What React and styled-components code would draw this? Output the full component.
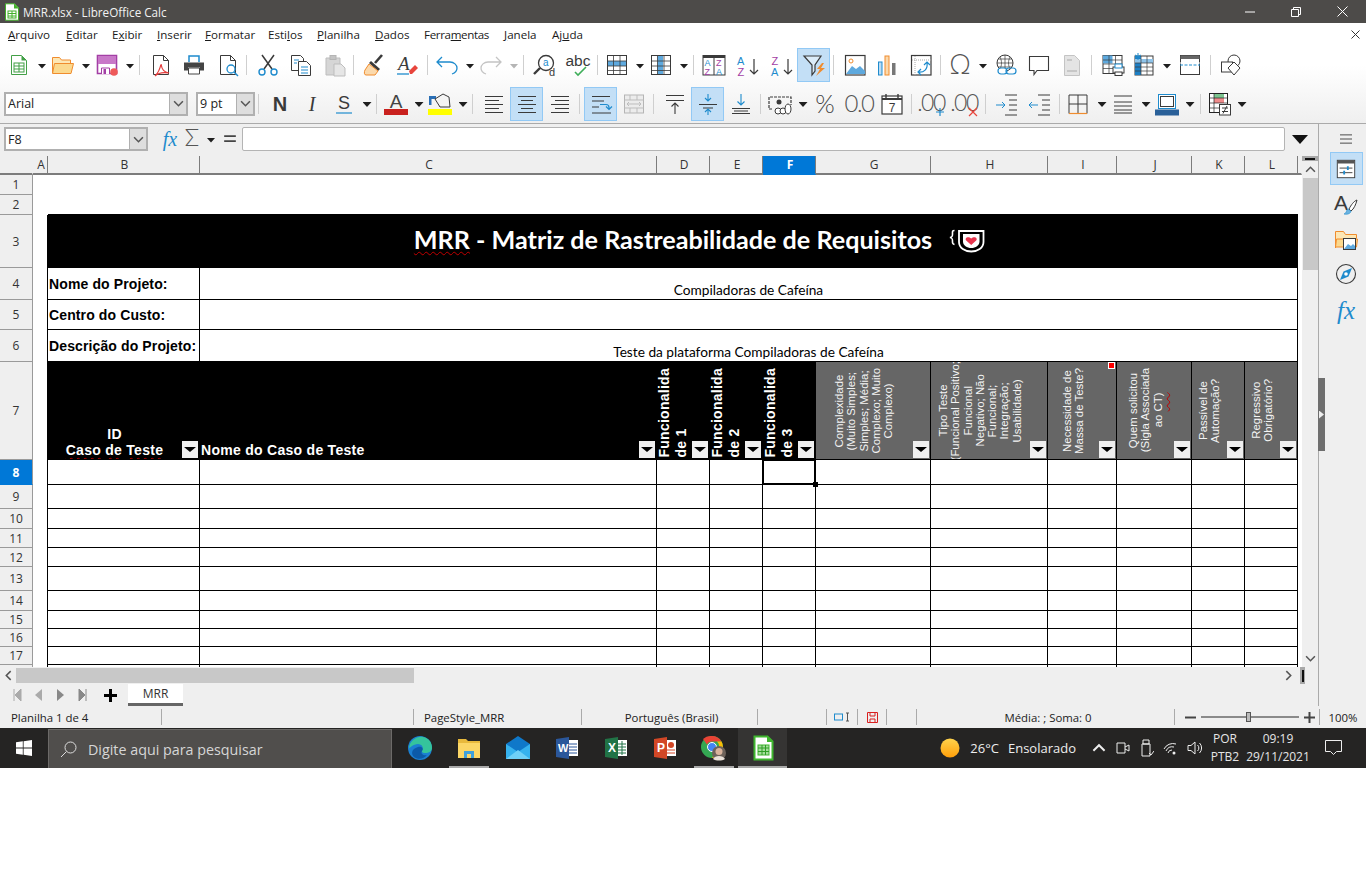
import React from 'react';
import styled, { createGlobalStyle } from 'styled-components';

const UI = '"Open Sans", "Noto Sans", sans-serif';
const ARIAL = '"Liberation Sans", Arial, sans-serif';
const CALIBRI = 'Lato, "Open Sans", sans-serif';
const SERIF = '"Liberation Serif", serif';

const Global = createGlobalStyle`
    html, body { margin: 0; padding: 0; background: #fff; }
    * { box-sizing: border-box; }
`;

const Page = styled.div`
    width: 1366px;
    height: 768px;
    display: flex;
    flex-direction: column;
    font-family: ${UI};
    overflow: hidden;
`;

const TitleBar = styled.div`
    height: 23px;
    flex: none;
    background: #4d4b49;
    color: #f2f2f2;
    display: flex;
    align-items: center;
    padding-left: 4px;
    padding-right: 1px;
    font-size: 11.7px;
`;

const TitleText = styled.span`
    margin-left: 3px;
    flex: 1;
`;

const WinButton = styled.div`
    width: 46px;
    height: 23px;
    display: flex;
    align-items: center;
    justify-content: center;
`;

const MenuBar = styled.div`
    height: 23px;
    flex: none;
    background: #fff;
    display: flex;
    align-items: center;
    padding-left: 8px;
    font-size: 11.6px;
    color: #1a1a1a;
`;

const MenuItem = styled.div`
    width: ${p => p.$w}px;
    flex: none;
    letter-spacing: ${p => (p.$tight ? '-0.35px' : '0')};
`;

const MenuClose = styled.div`
    margin-left: auto;
    width: 22px;
    display: flex;
    justify-content: center;
`;

const ToolStack = styled.div`
    height: 78px;
    flex: none;
    background: linear-gradient(#ffffff 0%, #ffffff 25%, #efefef 100%);
    border-bottom: 1px solid #aaa;
`;

const ToolRowBox = styled.div`
    height: ${p => p.$h}px;
    display: flex;
    align-items: center;
`;

const Slot = styled.div`
    flex: none;
    width: ${p => p.$w}px;
    height: 34px;
    display: flex;
    align-items: center;
    justify-content: center;
    background: ${p => (p.$active ? '#c3dff6' : 'transparent')};
    border: ${p => (p.$active ? '1px solid #92c9f5' : 'none')};
`;

const Sep = styled.div`
    flex: none;
    width: 1px;
    height: 20px;
    background: #cfcfcf;
`;

const Caret = styled.div`
    flex: none;
    width: 9px;
    height: 5px;
    margin-top: 2px;
    background: ${p => (p.$off ? '#b5b5b5' : '#1f1f1f')};
    clip-path: polygon(0 0, 100% 0, 50% 100%);
`;

const SelectBox = styled.div`
    flex: none;
    width: ${p => p.$w}px;
    height: 24px;
    background: #fff;
    border: 2px solid #b0b0b0;
    display: flex;
    align-items: center;
    font-size: 12.5px;
    color: #222;
`;

const SelectText = styled.span`
    flex: 1;
    padding-left: 2px;
`;

const SelectArrow = styled.span`
    width: 17px;
    height: 100%;
    background: #dedede;
    border-left: 1px solid #b0b0b0;
    display: flex;
    align-items: center;
    justify-content: center;
`;

const Workspace = styled.div`
    flex: 1;
    min-height: 0;
    display: flex;
`;

const MainColumn = styled.div`
    flex: 1;
    min-width: 0;
    display: flex;
    flex-direction: column;
    background: #efefef;
`;

const FormulaBar = styled.div`
    height: 32px;
    flex: none;
    display: flex;
    align-items: flex-start;
    padding: 3px 0 0 4px;
    background: #efefef;
`;

const FormulaIcon = styled.div`
    flex: none;
    width: ${p => p.$w}px;
    margin-left: ${p => p.$ml || 0}px;
    height: 24px;
    display: flex;
    align-items: center;
    justify-content: center;
`;

const FormulaInput = styled.div`
    flex: none;
    width: 1043px;
    height: 24px;
    margin-left: 3px;
    background: #fff;
    border: 1px solid #b4b4b4;
    border-radius: 2px;
`;

const SheetRow = styled.div`
    flex: none;
    height: 511px;
    display: flex;
`;

const SheetGrid = styled.div`
    flex: none;
    width: 1302px;
    height: 511px;
    overflow: hidden;
    background: #fff;
    display: grid;
    grid-template-columns: 33px 15px 152px 457px 53px 53px 53px 115px 117px 69px 75px 53px 53px 4px;
    grid-template-rows: 19px 20px 20px 53px 32px 30px 32px 98px 25px 24px 20px 19px 19px 24px 20px 18px 18px 18px 30px;
`;

const ColHead = styled.div`
    background: ${p => (p.$sel ? '#0078d7' : '#efefef')};
    color: ${p => (p.$sel ? '#fff' : '#333')};
    font-weight: ${p => (p.$sel ? 700 : 400)};
    font-size: 12px;
    border-bottom: 2px solid ${p => (p.$sel ? '#0078d7' : '#7c7c7c')};
    border-right: 1px solid ${p => (p.$bare ? 'transparent' : '#7c7c7c')};
    padding-left: 2px;
    display: flex;
    align-items: center;
    justify-content: center;
`;

const RowHead = styled.div`
    background: ${p => (p.$sel ? '#0078d7' : '#efefef')};
    color: ${p => (p.$sel ? '#fff' : '#333')};
    font-weight: ${p => (p.$sel ? 700 : 400)};
    font-size: 12px;
    border-bottom: 1px solid ${p => (p.$sel ? '#0078d7' : '#9a9a9a')};
    border-right: 1px solid #9a9a9a;
    display: flex;
    align-items: center;
    justify-content: center;
`;

const BlankHead = styled.div`
    background: #efefef;
    border-right: 1px solid #9a9a9a;
`;

const Blank = styled.div`
    grid-column: span ${p => p.$span || 1};
    border-bottom: ${p => (p.$line ? '1px solid #000' : 'none')};
`;

const Gutter = styled.div`
    border-right: 1px solid #000;
`;

const TitleCell = styled.div`
    grid-column: span 11;
    position: relative;
    background: #000;
    color: #fff;
    font-family: ${CALIBRI};
    font-weight: 700;
    font-size: 25.15px;
    display: flex;
    align-items: center;
    justify-content: center;
    padding-bottom: 5px;
`;

const Squiggle = styled.span`
    text-decoration: underline wavy #c00000 1px;
    text-underline-offset: 2px;
    text-decoration-skip-ink: none;
`;

const LogoMark = styled.svg`
    position: absolute;
    left: 901px;
    top: 14px;
`;

const LabelCell = styled.div`
    border-right: 1px solid #000;
    border-bottom: 1px solid #000;
    font-family: ${ARIAL};
    font-weight: 700;
    font-size: 14px;
    letter-spacing: 0.12px;
    color: #000;
    padding-left: 1px;
    display: flex;
    align-items: center;
    white-space: nowrap;
`;

const ValueCell = styled.div`
    grid-column: span 10;
    border-right: 1px solid #000;
    border-bottom: 1px solid #000;
    font-family: ${CALIBRI};
    font-size: 13.7px;
    color: #000;
    display: flex;
    align-items: flex-end;
    justify-content: center;
    line-height: 16px;
    padding-bottom: 1px;
`;

const HeadCell = styled.div`
    position: relative;
    background: ${p => (p.$gray ? '#666' : '#000')};
    border-right: 1px solid #000;
    border-bottom: 1px solid #000;
    color: #fff;
    font-family: ${ARIAL};
    overflow: hidden;
    display: flex;
    align-items: ${p => (p.$gray ? 'center' : 'flex-end')};
    justify-content: ${p => (p.$gray ? 'center' : 'flex-start')};
    padding-right: ${p => (p.$gray ? '18px' : '0')};
`;

const WideHead = styled.div`
    width: ${p => p.$w}px;
    flex: none;
    text-align: ${p => (p.$center ? 'center' : 'left')};
    font-weight: 700;
    font-size: 14px;
    letter-spacing: 0.28px;
    line-height: 16.6px;
    padding-left: ${p => (p.$center ? '0' : '1px')};
    padding-right: ${p => (p.$center ? '19px' : '0')};
`;

const TurnedBold = styled.div`
    writing-mode: vertical-rl;
    transform: rotate(180deg);
    white-space: pre;
    font-weight: 700;
    font-size: 14px;
    letter-spacing: 0.27px;
    line-height: 16.7px;
    text-align: left;
    padding: 1px 0 0 0;
    margin-left: -1px;
`;

const TurnedThin = styled.div`
    writing-mode: vertical-rl;
    transform: rotate(180deg);
    white-space: pre;
    font-size: 11.4px;
    line-height: 12.3px;
    text-align: center;
    color: #f4f4f4;
`;

const FilterButton = styled.div`
    position: absolute;
    right: 1px;
    bottom: 1px;
    width: 16px;
    height: 17px;
    background: #efefef;
    display: flex;
    align-items: center;
    justify-content: center;
`;

const CommentMark = styled.div`
    position: absolute;
    top: 0;
    right: 1px;
    width: 7px;
    height: 7px;
    background: #f00;
    border: 1px solid #fff;
`;

const DataCell = styled.div`
    position: relative;
    border-right: 1px solid #000;
    border-bottom: 1px solid #000;
`;

const Cursor = styled.div`
    position: absolute;
    left: -1px;
    top: -1px;
    right: -1px;
    bottom: -1px;
    border: 2px solid #000;
`;

const CursorHandle = styled.div`
    position: absolute;
    right: -4px;
    bottom: -4px;
    width: 5px;
    height: 5px;
    background: #000;
`;

const VScroll = styled.div`
    flex: none;
    width: 16px;
    height: 511px;
    position: relative;
    background: #efefef;
    display: flex;
    flex-direction: column;
    align-items: center;
`;

const SplitHandle = styled.div`
    width: 16px;
    height: 5px;
    background: #a8a8a8;
    display: flex;
    align-items: center;
    justify-content: center;
`;

const ScrollArrow = styled.div`
    height: ${p => p.$h}px;
    width: ${p => (p.$w ? `${p.$w}px` : 'auto')};
    margin-left: ${p => p.$ml || 0}px;
    display: flex;
    align-items: center;
    justify-content: center;
    flex: none;
`;

const VThumb = styled.div`
    width: 15px;
    height: 92px;
    background: #c8c8c8;
    flex: none;
`;

const HScroll = styled.div`
    height: 17px;
    flex: none;
    display: flex;
    align-items: center;
    background: #efefef;
`;

const HThumb = styled.div`
    width: 398px;
    height: 15px;
    background: #c8c8c8;
`;

const HSplit = styled.div`
    width: 5px;
    height: 17px;
    background: #a8a8a8;
    margin-left: 4px;
    display: flex;
    align-items: center;
    justify-content: center;
`;

const TabBar = styled.div`
    height: 23px;
    flex: none;
    display: flex;
    padding-left: 6px;
    background: #efefef;
    border-bottom: 1px solid #aaa;
`;

const TabNav = styled.div`
    flex: none;
    width: ${p => p.$w}px;
    display: flex;
    align-items: center;
    justify-content: center;
`;

const PlusTab = styled.div`
    flex: none;
    width: 37px;
    display: flex;
    align-items: center;
    justify-content: center;
`;

const SheetTab = styled.div`
    flex: none;
    width: 55px;
    background: #fff;
    border-bottom: 3px solid #666;
    margin-left: -1px;
    font-size: 12px;
    color: #333;
    display: flex;
    align-items: center;
    justify-content: center;
`;

const Sidebar = styled.div`
    flex: none;
    width: 48px;
    position: relative;
    background: #efefef;
    border-left: 1px solid #aaa;
    display: flex;
    flex-direction: column;
    align-items: center;
    padding: 2px 0 0 7px;
`;

const SideSlot = styled.div`
    flex: none;
    width: 33px;
    height: ${p => p.$h}px;
    display: flex;
    align-items: center;
    justify-content: center;
    background: ${p => (p.$active ? '#c3dff6' : 'transparent')};
    border: ${p => (p.$active ? '1px solid #92c9f5' : 'none')};
`;

const SideHandle = styled.div`
    position: absolute;
    left: -1px;
    top: 254px;
    width: 7px;
    height: 73px;
    background: #6e6e6e;
    display: flex;
    align-items: center;
    justify-content: center;
`;

const SideHandleArrow = styled.div`
    width: 5px;
    height: 8px;
    background: #eee;
    clip-path: polygon(0 0, 100% 50%, 0 100%);
`;

const StatusBar = styled.div`
    height: 22px;
    flex: none;
    background: #efefef;
    display: flex;
    align-items: center;
    font-size: 11.4px;
    color: #222;
`;

const StatusCell = styled.div`
    flex: none;
    width: ${p => p.$w}px;
    height: 16px;
    border-right: ${p => (p.$open ? 'none' : '1px solid #aaa')};
    display: flex;
    align-items: center;
    justify-content: ${p => (p.$left ? 'flex-start' : 'center')};
    padding-left: ${p => p.$left || p.$nudge || 0}px;
`;

const ZoomTrack = styled.div`
    position: relative;
    width: 98px;
    height: 2px;
    background: #8a8a8a;
    margin: 0 5px;
`;

const ZoomThumb = styled.div`
    position: absolute;
    left: 45px;
    top: -4px;
    width: 5px;
    height: 10px;
    background: #bbb;
    border: 1px solid #555;
`;

const TaskBar = styled.div`
    height: 40px;
    flex: none;
    background: #252423;
    display: flex;
    color: #eee;
`;

const StartButton = styled.div`
    flex: none;
    width: 48px;
    display: flex;
    align-items: center;
    justify-content: center;
`;

const SearchBox = styled.div`
    flex: none;
    width: 344px;
    background: #504e4c;
    border: 1px solid #6c6a68;
    border-bottom: none;
    margin-top: 1px;
    display: flex;
    align-items: center;
    padding-left: 11px;
    font-size: 14.3px;
    color: #d6d6d6;
    gap: 11px;
`;

const TaskGap = styled.div`
    flex: none;
    width: 3px;
`;

const AppSlot = styled.div`
    flex: none;
    position: relative;
    width: 49px;
    display: flex;
    align-items: center;
    justify-content: center;
    background: ${p => (p.$current ? '#353433' : 'transparent')};
    &::after {
        content: '';
        display: ${p => (p.$running || p.$current ? 'block' : 'none')};
        position: absolute;
        bottom: 0;
        left: ${p => (p.$current ? 0 : 5)}px;
        right: ${p => (p.$current ? 0 : 4)}px;
        height: 2px;
        background: #a9a9a9;
    }
`;

const Tray = styled.div`
    margin-left: auto;
    display: flex;
    align-items: center;
    font-size: 13px;
    color: #eee;
`;

const TrayIcon = styled.div`
    flex: none;
    width: ${p => p.$w || 24}px;
    margin-left: ${p => p.$ml || 0}px;
    display: flex;
    align-items: center;
    justify-content: center;
`;

const TrayLabel = styled.span`
    margin-left: ${p => p.$ml}px;
    flex: none;
`;

const TrayStack = styled.div`
    flex: none;
    width: ${p => p.$w}px;
    font-size: 12px;
    line-height: 18px;
    text-align: center;
    color: #e6e6e6;
`;

const D = '#3a3a3a';
const B = '#1e8bcd';
const O = '#f08c2e';
const P = '#a33fa5';

const tx = { fontFamily: ARIAL };
const thin = { fontFamily: CALIBRI, fontWeight: 300 };

const ICONS = {
    newCalc: <>
        <path d="M4.5 2.5h10l5 5v14h-15z" fill="#fff" stroke="#43a047" />
        <path d="M14.5 2.5l5 5h-5z" fill="#43a047" />
        <rect x="7" y="10" width="10" height="9" fill="#fff" stroke="#43a047" />
        <path d="M7 13h10M7 16h10M12 10v9" stroke="#43a047" />
    </>,
    open: <>
        <path d="M1.5 20V4.500h7l2 2.500h9v3" fill="#fde7b5" stroke={O} />
        <path d="M1.500 20.500l2-10h19l-2.500 10z" fill="#fbd98e" stroke={O} />
    </>,
    save: <>
        <path d="M2.500 2.500h19v18h-19z" fill="#fff" stroke={P} strokeWidth="1.600" />
        <path d="M3 3h18v8H3z" fill="#c878c8" />
        <path d="M6.500 21v-6h8v6" fill="#fff" stroke={P} />
        <rect x="8.500" y="16" width="2.500" height="5" fill={P} />
        <circle cx="19" cy="19" r="3.800" fill="#ee5a5a" />
    </>,
    pdf: <>
        <path d="M4.500 2.500h10l5 5v14h-15z" fill="#fff" stroke={D} />
        <path d="M14.500 2.500v5h5" fill="none" stroke={D} />
        <path d="M12 11c1 6 3 8 8 9-6-1-11 0-14 3 3-3 5-7 6-12z" fill="none" stroke="#e33b3b" strokeWidth="1.200" />
    </>,
    print: <>
        <path d="M7 9V3h10v6" fill="#fff" stroke={B} strokeWidth="1.500" />
        <path d="M2 9.500h20v8h-4v-3H6v3H2z" fill="#444" />
        <path d="M6.500 15h11v6h-11z" fill="#fff" stroke="#444" />
    </>,
    preview: <>
        <path d="M4.500 2.500h10l5 5v14h-15z" fill="#fff" stroke={D} />
        <path d="M14.500 2.500v5h5" fill="none" stroke={D} />
        <circle cx="15" cy="16" r="4" fill="#fff" stroke={B} strokeWidth="1.300" />
        <path d="M18 19l4 4" stroke={B} strokeWidth="1.500" />
    </>,
    cut: <>
        <path d="M6 2l10 14M18 2L8 16" stroke={D} strokeWidth="1.500" fill="none" />
        <circle cx="6" cy="19" r="3" fill="none" stroke={B} strokeWidth="1.400" />
        <circle cx="18" cy="19" r="3" fill="none" stroke={B} strokeWidth="1.400" />
    </>,
    copy: <>
        <path d="M2.500 2.500h9l3 3v12h-12z" fill="#fff" stroke={D} />
        <path d="M9.500 8.500h8l4 4v10h-12z" fill="#fff" stroke={D} />
        <path d="M5 7h5M5 10h3M12 14h7M12 17h7M12 20h7" stroke={B} />
    </>,
    paste: <>
        <path d="M3 5h14v17H3z" fill="#d6d6d6" stroke="#bdbdbd" />
        <rect x="7" y="2.500" width="6" height="4" fill="#c4c4c4" stroke="#b5b5b5" />
        <path d="M11 11h7l4 4v8H11z" fill="#e6e6e6" stroke="#bdbdbd" />
    </>,
    clone: <>
        <path d="M13 10l7-8" stroke={D} strokeWidth="2.600" />
        <path d="M9 8l9 8-2 2-9-8z" fill={D} />
        <path d="M7 11l9 7-3 4H4c-2 0-2-3-1-5z" fill="#fbd9ac" stroke={O} />
    </>,
    clear: <>
        <text x="3" y="17" fontSize="19" fontStyle="italic" fill={D} style={{ fontFamily: SERIF }}>A</text>
        <path d="M2 21h12" stroke={B} strokeWidth="1.300" />
        <path d="M14 18l6-6 3 3-6 6h-2z" fill="#e8453c" />
    </>,
    undo: <path d="M7 4L2 9l5 5M2 9h13c4 0 7 3 7 6s-2 5-5 6" fill="none" stroke={B} strokeWidth="1.300" />,
    redo: <path d="M17 4l5 5-5 5M22 9H9c-4 0-7 3-7 6s2 5 5 6" fill="none" stroke="#c4c4c4" strokeWidth="1.300" />,
    find: <>
        <circle cx="13" cy="10" r="7.500" fill="#fff" stroke={D} strokeWidth="1.300" />
        <path d="M7 15l-6 6" stroke={D} strokeWidth="2.400" />
        <text x="10" y="13" fontSize="10" fill={B} style={tx}>a</text>
        <text x="16" y="23" fontSize="11" fill={D} style={tx}>d</text>
    </>,
    spell: <>
        <text x="12" y="13" textAnchor="middle" fontSize="15.500" fill={D} style={tx}>abc</text>
        <path d="M9 19l3 3 8-8" fill="none" stroke="#3fae5a" strokeWidth="1.600" />
    </>,
    rows: <>
        <rect x="2.500" y="2.500" width="19" height="19" fill="#fff" stroke={D} />
        <rect x="3" y="8" width="18" height="5" fill="#5ea9de" />
        <path d="M2.500 8h19M2.500 13h19M2.500 17.500h19M8.500 2.500v19M15 2.500v19" stroke={D} strokeWidth=".8" />
    </>,
    cols: <>
        <rect x="2.500" y="2.500" width="19" height="19" fill="#fff" stroke={D} />
        <rect x="8.500" y="3" width="5.500" height="18" fill="#5ea9de" />
        <path d="M2.500 8h19M2.500 13h19M2.500 17.500h19M8.500 2.500v19M15 2.500v19" stroke={D} strokeWidth=".8" />
    </>,
    azBox: <>
        <rect x="1" y="2.500" width="22" height="19.500" fill="#fff" stroke={D} />
        <rect x="1" y="2" width="22" height="3" fill={D} />
        <path d="M12 5v17" stroke={D} />
        <text x="2.500" y="13" fontSize="9" fill={B} style={tx}>A</text>
        <text x="2.500" y="21.500" fontSize="9" fill={P} style={tx}>Z</text>
        <text x="14" y="13" fontSize="9" fill={P} style={tx}>Z</text>
        <text x="14" y="21.500" fontSize="9" fill={B} style={tx}>A</text>
    </>,
    sortAsc: <>
        <text x="1" y="11.500" fontSize="11" fill={B} style={tx}>A</text>
        <text x="1.500" y="22.500" fontSize="11" fill={P} style={tx}>Z</text>
        <path d="M18 6v15M14 17l4 4 4-4" fill="none" stroke={D} strokeWidth="1.200" />
    </>,
    sortDesc: <>
        <text x="1.500" y="11.500" fontSize="11" fill={P} style={tx}>Z</text>
        <text x="1" y="22.500" fontSize="11" fill={B} style={tx}>A</text>
        <path d="M18 6v15M14 17l4 4 4-4" fill="none" stroke={D} strokeWidth="1.200" />
    </>,
    filter: <>
        <path d="M2 3h17l-6 9v6l-3 4v-10z" fill="#fff" fillOpacity=".4" stroke={D} strokeWidth="1.200" />
        <path d="M20 10l-5 6h3l-4 7 9-8h-4l3-5z" fill={O} />
    </>,
    image: <>
        <rect x="2.500" y="2.500" width="19.500" height="19.500" fill="#fff" stroke={D} strokeWidth="1.200" />
        <circle cx="8" cy="8" r="2" fill="none" stroke={O} />
        <path d="M3 21l6-8 4 3 4-3 5 5v3z" fill="#5ea9de" />
    </>,
    chart: <>
        <rect x="3.500" y="9" width="3.500" height="13" fill="#bcdcf3" stroke={B} />
        <rect x="10" y="3" width="4" height="19" fill="#fbd9ac" stroke={O} />
        <rect x="17" y="10" width="3.500" height="12" fill="#777" />
    </>,
    pivot: <>
        <rect x="2.500" y="2.500" width="19.500" height="19.500" fill="#fff" stroke={D} strokeWidth="1.200" />
        <path d="M6 3v19M3 7h19" stroke="#aaa" strokeDasharray="1 1" />
        <path d="M9 19c6 1 10-3 9-9M15 12l3-3 3 3M12 16l-3 3 3 3" fill="none" stroke={B} strokeWidth="1.200" />
    </>,
    omega: <text x="12" y="21" textAnchor="middle" fontSize="27" fill="#555" style={thin}>Ω</text>,
    link: <>
        <circle cx="11" cy="10" r="8" fill="#fff" stroke={D} />
        <path d="M3 10h16M11 2v16M6 4c2 4 2 8 0 12M16 4c-2 4-2 8 0 12M4 6h14M4 14h14" stroke={D} strokeWidth=".7" fill="none" />
        <rect x="4" y="15" width="9" height="6" rx="3" fill="#fff" stroke={B} strokeWidth="1.200" />
        <rect x="12" y="15" width="10" height="6" rx="3" fill="none" stroke={B} strokeWidth="1.200" />
    </>,
    comment: <path d="M2.500 3.500h19v14H10l-3 4v-4H2.500z" fill="#fff" stroke={D} strokeWidth="1.100" />,
    pageOff: <>
        <path d="M4.500 2.500h10l5 5v15h-15z" fill="#e4e4e4" stroke="#c4c4c4" />
        <path d="M7 7h5M7 18h10" stroke="#bdbdbd" strokeWidth="1.400" />
    </>,
    printArea: <>
        <rect x="2" y="2.500" width="19" height="18" fill="#fff" stroke={D} />
        <rect x="2" y="2.500" width="9.500" height="8" fill="#5ea9de" />
        <path d="M2 7h19M2 11h19M2 15.500h19M8 2.500v18M14.500 2.500v18" stroke={D} strokeWidth=".7" />
        <rect x="12" y="14" width="11" height="6" fill="#fff" stroke={D} />
        <rect x="14" y="11" width="7" height="4" fill="#fff" stroke={B} />
        <rect x="14" y="19" width="7" height="3.500" fill="#fff" stroke={D} />
    </>,
    freeze: <>
        <rect x="3" y="3" width="18" height="19" fill="#fff" stroke={D} />
        <rect x="3" y="3" width="6" height="19" fill="#1e7fc4" />
        <rect x="3" y="6" width="18" height="4" fill="#8fc4ea" />
        <path d="M3 10h18M3 14h18M3 18h18M9 3v19M15 3v19" stroke={D} strokeWidth=".7" />
        <path d="M6 0v7M3 2l6 3M9 2L3 5" stroke="#1e8bcd" strokeWidth="1" />
    </>,
    header: <>
        <rect x="2.500" y="2.500" width="19" height="19" fill="#fff" stroke={D} />
        <rect x="2.500" y="2.500" width="19" height="3.500" fill="#666" />
        <path d="M2 12h20" stroke={B} strokeDasharray="3 1.500" />
        <path d="M1.500 10h2M20.500 10h2" stroke="#fff" />
    </>,
    shapes: <>
        <circle cx="15" cy="8" r="6" fill="#fff" stroke={D} />
        <rect x="2.500" y="9" width="11" height="10" fill="#fff" stroke={D} />
        <path d="M15 9l6 6-6 7-6-7z" fill="#fff" stroke={D} />
    </>,
    bold: <text x="12" y="19" textAnchor="middle" fontSize="20" fontWeight="700" fill={D} style={tx}>N</text>,
    italic: <text x="12" y="19" textAnchor="middle" fontSize="20" fontStyle="italic" fill={D} style={{ fontFamily: SERIF }}>I</text>,
    under: <>
        <text x="12" y="17" textAnchor="middle" fontSize="18" fill={D} style={tx}>S</text>
        <path d="M4 21h16" stroke={B} strokeWidth="1.200" />
    </>,
    fontColor: <>
        <text x="12" y="16" textAnchor="middle" fontSize="19" fill="#444" style={tx}>A</text>
        <rect x="0" y="17" width="24" height="6" fill="#c9211e" />
    </>,
    bgColor: <>
        <path d="M1 4h7v3H3.500v6H1z" fill="#2a6fb5" />
        <path d="M7 7l8-5 6 3 1 10H12z" fill="#f4f4f4" stroke={D} />
        <rect x="0" y="17" width="24" height="6" fill="#ffff00" />
    </>,
    alignLeft: <path d="M3 4.500h18M3 8.500h14M3 12.500h18M3 16.500h14M3 20.500h18" stroke={D} strokeWidth="1.100" />,
    alignCenter: <path d="M3 4.500h18M6 8.500h12M3 12.500h18M6 16.500h12M3 20.500h18" stroke={D} strokeWidth="1.100" />,
    alignRight: <path d="M3 4.500h18M7 8.500h14M3 12.500h18M7 16.500h14M3 20.500h18" stroke={D} strokeWidth="1.100" />,
    wrap: <>
        <path d="M3 4.500h18M3 9h12M3 21h19M3 15h7" stroke={D} strokeWidth="1.100" />
        <path d="M13 12.500h6c2 0 3 1 3 3v1M19 14.500l3 3 3-3" transform="translate(-2 0)" fill="none" stroke={B} strokeWidth="1.200" />
    </>,
    merge: <>
        <rect x="2.500" y="3" width="19" height="18" fill="#ececec" stroke="#b5b5b5" />
        <path d="M2.500 8h19M2.500 16h19M8 3v5M15 3v5M8 16v5M15 16v5M5 12h14M7 10l-2 2 2 2M17 10l2 2-2 2" fill="none" stroke="#bdbdbd" />
    </>,
    vTop: <path d="M3 3.500h18M3 8.500h18M12 22V11M8.500 14.500L12 11l3.500 3.500" fill="none" stroke={D} strokeWidth="1.100" />,
    vMid: <>
        <path d="M3 12.500h18M7 16h10" fill="none" stroke={D} strokeWidth="1.100" />
        <path d="M12 2v7M9 6l3 3 3-3M12 23v-6M9 20l3-3 3 3" fill="none" stroke={B} strokeWidth="1.100" />
    </>,
    vBot: <>
        <path d="M3 16.500h18M3 21.500h18M5 19h14" fill="none" stroke={D} strokeWidth="1.100" />
        <path d="M12 2v11M8.500 9.500L12 13l3.500-3.500" fill="none" stroke={B} strokeWidth="1.100" />
    </>,
    currency: <>
        <path d="M4 17H1V5h22v8" fill="none" stroke={D} strokeDasharray="3 1" strokeWidth="1.200" />
        <circle cx="11" cy="10" r="2.500" fill={D} />
        <ellipse cx="10" cy="19" rx="3" ry="3" fill="#fff" stroke={D} />
        <ellipse cx="15" cy="19" rx="3" ry="3" fill="#fff" stroke={D} />
        <ellipse cx="20" cy="17" rx="3" ry="5" fill="#fff" stroke={D} />
    </>,
    percent: <text x="12" y="21" textAnchor="middle" fontSize="25" fill="#444" style={thin}>%</text>,
    number: <text x="12" y="20" textAnchor="middle" fontSize="24" letterSpacing="-1.500" fill="#555" style={thin}>0.0</text>,
    date: <>
        <rect x="2" y="4" width="20" height="18" fill="#fff" stroke={D} strokeWidth="1.200" />
        <path d="M2 7h20" stroke={D} strokeWidth="2" />
        <path d="M6 2v4M18 2v4" stroke={D} strokeWidth="1.400" />
        <text x="12" y="20" textAnchor="middle" fontSize="12" fill={D} style={tx}>7</text>
    </>,
    addDec: <>
        <text x="10" y="19" textAnchor="middle" fontSize="23" letterSpacing="-1.500" fill="#555" style={thin}>.00</text>
        <path d="M19 16v8M15 20h8" stroke={B} strokeWidth="1.200" />
    </>,
    delDec: <>
        <text x="10" y="19" textAnchor="middle" fontSize="23" letterSpacing="-1.500" fill="#555" style={thin}>.00</text>
        <path d="M15 16l8 8M23 16l-8 8" stroke="#e8453c" strokeWidth="1.200" />
    </>,
    indent: <>
        <path d="M10 3h12M14 8h8M14 13h8M14 18h8M10 23h12" stroke={D} fill="none" />
        <path d="M1 13h9M7 10l3 3-3 3" fill="none" stroke={B} />
    </>,
    outdent: <>
        <path d="M10 3h12M14 8h8M14 13h8M14 18h8M10 23h12" stroke={D} fill="none" />
        <path d="M10 13H1M4 10l-3 3 3 3" fill="none" stroke={B} />
    </>,
    border: <>
        <path d="M3 21.500V3h18v18.500M12 3v18M3 12h18" fill="none" stroke={D} />
        <path d="M3 21.500h18" stroke={O} strokeWidth="1.200" />
    </>,
    borderStyle: <path d="M3 4h18M3 10h18M3 14h18M3 18h18M3 21h18" stroke={D} strokeWidth="1" />,
    borderColor: <>
        <rect x="3.500" y="2.500" width="17" height="14" fill="#fff" stroke={B} strokeWidth="1" />
        <rect x="5.500" y="4.500" width="13" height="10" fill="#fff" stroke={D} strokeWidth="1" />
        <rect x="0" y="17.500" width="24" height="6" fill="#2a6099" />
    </>,
    cond: <>
        <rect x="1.500" y="1.500" width="18" height="19" fill="#fff" stroke="#222" />
        <rect x="6" y="2" width="10" height="4" fill="#7cc48f" />
        <rect x="6" y="6" width="10" height="5" fill="#f08b8b" />
        <path d="M1.500 6h18M1.500 11h18M1.500 16h18M6 1.500v19" stroke="#222" strokeWidth=".7" />
        <rect x="11.500" y="12.500" width="11" height="10.500" fill="#fff" stroke={D} />
        <path d="M14 16h6M14 19.500h6M19 14l-4 7.500" stroke={D} />
    </>,
    fx: <text x="12" y="19" textAnchor="middle" fontSize="20" fontStyle="italic" fill={B} style={{ fontFamily: SERIF }}>fx</text>,
    sigma: <text x="12" y="19" textAnchor="middle" fontSize="24" fill="#555" style={thin}>Σ</text>,
    equals: <path d="M5 8.500h14M5 14.500h14" stroke="#444" strokeWidth="2.200" />,
    menu: <path d="M4 6.500h16M4 12h16M4 17.500h16" stroke={D} strokeWidth="1.200" />,
    props: <>
        <rect x="2.500" y="2.500" width="19" height="19" fill="#fff" stroke={D} />
        <rect x="2.500" y="2.500" width="19" height="3.500" fill="#555" />
        <path d="M5 11h14M5 16h14" stroke={D} />
        <path d="M14 9v4M10 14v4" stroke={B} strokeWidth="2" />
    </>,
    styles: <>
        <text x="0" y="18" fontSize="21" fill={D} style={tx}>A</text>
        <path d="M23 8c-3 1-6 5-8 9l2 2c3-2 5-7 6-11z" fill="#fff" stroke={D} />
        <path d="M14 17c-2 1-1 4-4 5 4 1 7-1 7-3z" fill="#6bb2e0" stroke={B} strokeWidth=".6" />
    </>,
    gallery: <>
        <path d="M1.500 20V3.500h8l2 3h11v4" fill="#fde7b5" stroke={O} />
        <path d="M1.500 19l1-8h21l-1 8z" fill="#fbd98e" stroke={O} />
        <rect x="9.500" y="10.500" width="12" height="11" fill="#fff" stroke={D} />
        <path d="M10 21l4-5 3 2 2-2 2 2v3z" fill="#5ea9de" />
    </>,
    navigator: <>
        <circle cx="12" cy="12" r="9.500" fill="none" stroke={D} strokeWidth="1.100" />
        <path d="M18 6l-3.500 8.500L6 18l3.500-8.500z" fill={B} />
        <circle cx="12" cy="12" r="1.800" fill="#fff" />
    </>,
};

const Icon = ({ name, size = 24 }) => (
    <svg width={size} height={size} viewBox="0 0 24 24" style={{ display: 'block', overflow: 'visible' }}>
        {ICONS[name]}
    </svg>
);

const Chevron = ({ dir = 'down', color = '#555', size = 11 }) => {
    const turns = { down: 0, up: 180, left: 90, right: -90 };
    return (
        <svg width={size} height={size} viewBox="0 0 10 10" style={{ transform: `rotate(${turns[dir]}deg)` }}>
            <path d="M1 3l4 4 4-4" fill="none" stroke={color} strokeWidth="1.400" />
        </svg>
    );
};

const topTools = [
    ['newCalc', 19], ['caret', 42], ['open', 63], ['caret', 86], ['save', 107], ['caret', 130], ['sep', 139.5],
    ['pdf', 161], ['print', 194], ['preview', 228], ['sep', 246],
    ['cut', 268], ['copy', 301], ['paste', 335], ['sep', 353],
    ['clone', 374], ['clear', 407], ['sep', 427],
    ['undo', 447], ['caret', 470], ['redo', 491], ['caretOff', 514], ['sep', 523],
    ['find', 545], ['spell', 578], ['sep', 597],
    ['rows', 617], ['caret', 640], ['cols', 661], ['caret', 684], ['sep', 693],
    ['azBox', 714], ['sortAsc', 748], ['sortDesc', 782], ['filter', 813.5], ['sep', 833],
    ['image', 855], ['chart', 887], ['pivot', 921], ['sep', 940],
    ['omega', 960], ['caret', 983], ['link', 1006], ['comment', 1039], ['pageOff', 1072], ['sep', 1091],
    ['printArea', 1113], ['freeze', 1144], ['caret', 1167], ['header', 1190], ['sep', 1210],
    ['shapes', 1231],
];

const formatTools = [
    ['fontName', 96], ['fontSize', 225.5], ['sep', 258.5],
    ['bold', 280], ['italic', 312], ['under', 344], ['caret', 367], ['sep', 376],
    ['fontColor', 396], ['caret', 419], ['bgColor', 440], ['caret', 463], ['sep', 472],
    ['alignLeft', 494], ['alignCenter', 526.5], ['alignRight', 560], ['sep', 579],
    ['wrap', 600.5], ['merge', 634], ['sep', 653],
    ['vTop', 675], ['vMid', 707.5], ['vBot', 741], ['sep', 760],
    ['currency', 780], ['caret', 803], ['percent', 825], ['number', 859], ['date', 892], ['sep', 911],
    ['addDec', 933], ['delDec', 966], ['sep', 985],
    ['indent', 1007], ['outdent', 1040], ['sep', 1059],
    ['border', 1078], ['caret', 1102], ['borderStyle', 1123], ['caret', 1146], ['borderColor', 1167], ['caret', 1190], ['sep', 1200],
    ['cond', 1220], ['caret', 1242],
];

const ACTIVE = ['filter', 'alignCenter', 'wrap', 'vMid'];

const widthOf = name => {
    if (name === 'sep') return 1;
    if (name === 'caret' || name === 'caretOff') return 9;
    if (name === 'fontName') return 184;
    if (name === 'fontSize') return 59;
    return 33;
};

const ToolRow = ({ items, height }) => {
    let edge = 0;
    return (
        <ToolRowBox $h={height}>
            {items.map(([name, center], i) => {
                const w = widthOf(name);
                const gap = { marginLeft: center - w / 2 - edge };
                edge = center + w / 2;
                if (name === 'sep') return <Sep key={i} style={gap} />;
                if (name === 'caret') return <Caret key={i} style={gap} />;
                if (name === 'caretOff') return <Caret key={i} $off style={gap} />;
                if (name === 'fontName' || name === 'fontSize') {
                    return (
                        <SelectBox key={i} $w={w} style={gap}>
                            <SelectText>{name === 'fontName' ? 'Arial' : '9 pt'}</SelectText>
                            <SelectArrow><Chevron /></SelectArrow>
                        </SelectBox>
                    );
                }
                return (
                    <Slot key={i} $w={w} $active={ACTIVE.includes(name)} style={gap}>
                        <Icon name={name} />
                    </Slot>
                );
            })}
        </ToolRowBox>
    );
};

const menus = [
    ['', 'A', 'rquivo', 58], ['', 'E', 'ditar', 46], ['E', 'x', 'ibir', 45], ['', 'I', 'nserir', 48],
    ['', 'F', 'ormatar', 63], ['Esti', 'l', 'os', 49], ['', 'P', 'lanilha', 58], ['', 'D', 'ados', 49],
    ['Ferra', 'm', 'entas', 80], ['', 'J', 'anela', 48], ['Aj', 'u', 'da', 40],
];

const columns = ['B', 'C', 'D', 'E', 'F', 'G', 'H', 'I', 'J', 'K', 'L'];
const dataRows = [8, 9, 10, 11, 12, 13, 14, 15, 16, 17];

const grayHeads = [
    'Complexidade\n(Muito Simples;\nSimples; Média;\nComplexo; Muito\nComplexo)',
    'Tipo Teste\n(Funcional Positivo;\nFuncional\nNegativo; Não\nFuncional;\nIntegração;\nUsabilidade)',
    'Necessidade de\nMassa de Teste?',
    null,
    'Passível de\nAutomação?',
    'Regressivo\nObrigatório?',
];

const FilterArrow = () => (
    <FilterButton>
        <svg width="12" height="5" viewBox="0 0 12 5"><path d="M0 0h12L6 5z" fill="#000" /></svg>
    </FilterButton>
);

const Logo = () => (
    <LogoMark width="36" height="24" viewBox="0 0 36 24">
        <path d="M5.500 1.500C3 1.500 3.500 3 3.500 5s0 3-2.500 3.500C3.500 9 3.500 10 3.500 12s-.5 3 2 3.500" fill="none" stroke="#fff" strokeWidth="1.600" />
        <path d="M10 2h24.500v11c0 6-6 9.500-12.250 9.500S10 19 10 13z" fill="none" stroke="#fff" strokeWidth="1.800" />
        <path d="M14 5h16.500v7.500c0 4-4 6.500-8.250 6.500S14 16.500 14 12.500z" fill="#fff" />
        <path d="M22.200 16l-5-4.500c-2-2.500 2-5 5-2 3-3 7-.5 5 2z" fill="#e8364f" />
    </LogoMark>
);

const Windows = () => (
    <svg width="16" height="16" viewBox="0 0 16 16"><path d="M0 2.200l6.800-.9v6.300H0zM7.600 1.200L16 0v7.600H7.600zM0 8.400h6.800v6.300L0 13.800zM7.600 8.400H16V16l-8.400-1.200z" fill="#fff" /></svg>
);

const Apps = {
    edge: <svg width="24" height="24" viewBox="0 0 24 24">
        <circle cx="12" cy="12" r="12" fill="#1b7fd1" />
        <path d="M1 12C2 4 9 0 15 1c6 1 9 6 9 11 0 3-3 5-7 5-3 0-4-2-3-3 2-2 0-6-4-6-5 0-8 4-9 4z" fill="#35c49c" />
        <path d="M10 11c4-1 6 2 4 4-2 3 2 5 5 4-3 4-9 5-13 2-3-3-3-8 4-10z" fill="#0c5aa8" />
    </svg>,
    folder: <svg width="24" height="24" viewBox="0 0 24 24">
        <path d="M1 3h8l2 2h12v15H1z" fill="#e8b93c" />
        <path d="M1 7h22v15H1z" fill="#fbd666" />
        <rect x="7" y="15" width="10" height="7" fill="#3fa0dc" />
        <rect x="10" y="18" width="4" height="4" fill="#fbd666" />
    </svg>,
    mail: <svg width="26" height="24" viewBox="0 0 26 24">
        <path d="M1 8l12-8 12 8v15H1z" fill="#0f78c9" />
        <path d="M1 8l12 8 12-8v15H1z" fill="#36b2ee" />
        <path d="M1 23l12-9 12 9z" fill="#6fd0f7" />
    </svg>,
    word: <svg width="24" height="24" viewBox="0 0 24 24">
        <rect x="12" y="4" width="11" height="16" fill="#fff" />
        <path d="M14 8h8M14 11h8M14 14h8M14 17h8" stroke="#2b579a" />
        <path d="M1 3l13-2v22L1 21z" fill="#2b579a" />
        <text x="3" y="16" fontSize="11" fontWeight="700" fill="#fff" style={tx}>W</text>
    </svg>,
    excel: <svg width="24" height="24" viewBox="0 0 24 24">
        <rect x="12" y="4" width="11" height="16" fill="#fff" />
        <path d="M14 8h8M14 11h8M14 14h8M14 17h8M18 5v14" stroke="#217346" />
        <path d="M1 3l13-2v22L1 21z" fill="#217346" />
        <text x="4" y="16" fontSize="12" fontWeight="700" fill="#fff" style={tx}>X</text>
    </svg>,
    ppt: <svg width="24" height="24" viewBox="0 0 24 24">
        <rect x="12" y="4" width="11" height="16" fill="#fff" />
        <path d="M14 14h8M14 17h8" stroke="#d24726" />
        <circle cx="18" cy="9" r="3" fill="#d24726" />
        <path d="M1 3l13-2v22L1 21z" fill="#d24726" />
        <text x="4" y="16" fontSize="12" fontWeight="700" fill="#fff" style={tx}>P</text>
    </svg>,
    chrome: <svg width="26" height="26" viewBox="0 0 26 26">
        <circle cx="11" cy="12" r="11" fill="#34a853" />
        <path d="M11 1a11 11 0 0 1 9.500 5.500H11a5.500 5.500 0 0 0-5 3L2 4a11 11 0 0 1 9-3z" fill="#ea4335" />
        <path d="M20.500 6.500A11 11 0 0 1 11 23l5-8a5.500 5.500 0 0 0 0-8.500z" fill="#fbbc05" />
        <circle cx="11" cy="12" r="4.500" fill="#4285f4" stroke="#fff" />
        <circle cx="18" cy="18" r="7" fill="#6d625a" />
        <circle cx="18" cy="16.500" r="3.500" fill="#d9b39c" />
        <path d="M12 24c2-4 10-4 12 0-3 2-9 2-12 0z" fill="#e8e0d8" />
    </svg>,
    calc: <svg width="24" height="26" viewBox="0 0 24 26">
        <path d="M3.500 1.500h13l5 5v18h-18z" fill="#fff" stroke="#3fb52f" strokeWidth="2" />
        <path d="M16 1l6 6h-6z" fill="#3fb52f" />
        <rect x="7" y="10" width="11" height="10" fill="#a6dc9d" stroke="#3fb52f" />
        <path d="M7 13h11M7 16.500h11M11 10v10M14.500 10v10" stroke="#2f9e25" />
    </svg>,
};

const App = () => (
    <Page>
        <Global />
        <TitleBar>
            <svg width="16" height="18" viewBox="0 0 16 18">
                <path d="M1.500.8h9l4 4v12.400h-13z" fill="#fff" stroke="#43b02a" />
                <path d="M10 .5l5 5h-5z" fill="#43b02a" />
                <rect x="4" y="8" width="8" height="7" fill="#fff" stroke="#43b02a" />
                <path d="M4 10.500h8M4 13h8M8 8v7" stroke="#43b02a" />
            </svg>
            <TitleText>MRR.xlsx - LibreOffice Calc</TitleText>
            <WinButton>
                <svg width="10" height="2" viewBox="0 0 10 2"><path d="M0 1h10" stroke="#fff" /></svg>
            </WinButton>
            <WinButton>
                <svg width="10" height="10" viewBox="0 0 10 10"><path d="M2.500 2.500V.5h7v7h-2M.5 2.500h7v7h-7z" fill="none" stroke="#fff" /></svg>
            </WinButton>
            <WinButton>
                <svg width="11" height="11" viewBox="0 0 11 11"><path d="M.5.5l10 10M10.500.5l-10 10" stroke="#fff" /></svg>
            </WinButton>
        </TitleBar>

        <MenuBar>
            {menus.map(([pre, key, post, w]) => (
                <MenuItem key={key + post} $w={w} $tight={w === 80}>{pre}<u>{key}</u>{post}</MenuItem>
            ))}
            <MenuClose>
                <svg width="9" height="9" viewBox="0 0 9 9"><path d="M.5.500l8 8M8.500.500l-8 8" stroke="#333" /></svg>
            </MenuClose>
        </MenuBar>

        <ToolStack>
            <ToolRow items={topTools} height={38} />
            <ToolRow items={formatTools} height={39} />
        </ToolStack>

        <Workspace>
            <MainColumn>
                <FormulaBar>
                    <SelectBox $w={144}>
                        <SelectText>F8</SelectText>
                        <SelectArrow><Chevron /></SelectArrow>
                    </SelectBox>
                    <FormulaIcon $w={26} $ml={9}><Icon name="fx" /></FormulaIcon>
                    <FormulaIcon $w={18}><Icon name="sigma" /></FormulaIcon>
                    <FormulaIcon $w={20}><Caret /></FormulaIcon>
                    <FormulaIcon $w={18}><Icon name="equals" size={20} /></FormulaIcon>
                    <FormulaInput />
                    <FormulaIcon $w={30}>
                        <svg width="16" height="9" viewBox="0 0 16 9"><path d="M0 0h16L8 9z" fill="#111" /></svg>
                    </FormulaIcon>
                </FormulaBar>

                <SheetRow>
                    <SheetGrid>
                        <ColHead $bare />
                        <ColHead>A</ColHead>
                        {columns.map(c => <ColHead key={c} $sel={c === 'F'}>{c}</ColHead>)}
                        <ColHead $bare />

                        <RowHead>1</RowHead>
                        <Blank $span={13} />

                        <RowHead>2</RowHead>
                        <Blank />
                        <Blank $span={11} $line />
                        <Blank />

                        <RowHead>3</RowHead>
                        <Gutter />
                        <TitleCell>
                            <span><Squiggle>MRR</Squiggle> - Matriz de Rastreabilidade de Requisitos</span>
                            <Logo />
                        </TitleCell>
                        <Blank />

                        <RowHead>4</RowHead>
                        <Gutter />
                        <LabelCell>Nome do Projeto:</LabelCell>
                        <ValueCell>Compiladoras de Cafeína</ValueCell>
                        <Blank />

                        <RowHead>5</RowHead>
                        <Gutter />
                        <LabelCell>Centro do Custo:</LabelCell>
                        <ValueCell />
                        <Blank />

                        <RowHead>6</RowHead>
                        <Gutter />
                        <LabelCell>Descrição do Projeto:</LabelCell>
                        <ValueCell>Teste da plataforma Compiladoras de Cafeína</ValueCell>
                        <Blank />

                        <RowHead>7</RowHead>
                        <Gutter />
                        <HeadCell>
                            <WideHead $w={152} $center>
                                ID<br />
                                <Squiggle>Caso</Squiggle> <Squiggle>de</Squiggle> <Squiggle>Teste</Squiggle>
                            </WideHead>
                            <FilterArrow />
                        </HeadCell>
                        <HeadCell>
                            <WideHead $w={400}>Nome do Caso de Teste</WideHead>
                            <FilterArrow />
                        </HeadCell>
                        {[1, 2, 3].map(n => (
                            <HeadCell key={n}>
                                <TurnedBold>{`Funcionalida\nde ${n}`}</TurnedBold>
                                <FilterArrow />
                            </HeadCell>
                        ))}
                        {grayHeads.map((text, i) => (
                            <HeadCell key={i} $gray>
                                {text ? (
                                    <TurnedThin>{text}</TurnedThin>
                                ) : (
                                    <TurnedThin>
                                        {'Quem solicitou\n(Sigla Associada\nao '}<Squiggle>CT)</Squiggle>
                                    </TurnedThin>
                                )}
                                {i === 2 && <CommentMark />}
                                <FilterArrow />
                            </HeadCell>
                        ))}
                        <Blank />

                        {dataRows.map(row => (
                            <React.Fragment key={row}>
                                <RowHead $sel={row === 8}>{row}</RowHead>
                                <Gutter />
                                {columns.map(c => (
                                    <DataCell key={c}>
                                        {row === 8 && c === 'F' && <Cursor><CursorHandle /></Cursor>}
                                    </DataCell>
                                ))}
                                <Blank />
                            </React.Fragment>
                        ))}

                        <BlankHead />
                        <Gutter />
                        {columns.map(c => <Gutter key={c} />)}
                        <Blank />
                    </SheetGrid>

                    <VScroll>
                        <SplitHandle>
                            <svg width="10" height="2" viewBox="0 0 10 2"><path d="M0 1h10" stroke="#111" strokeWidth="2" /></svg>
                        </SplitHandle>
                        <ScrollArrow $h={17}><Chevron dir="up" /></ScrollArrow>
                        <VThumb />
                        <ScrollArrow $h={379} />
                        <ScrollArrow $h={18}><Chevron /></ScrollArrow>
                    </VScroll>
                </SheetRow>

                <HScroll>
                    <ScrollArrow $h={15} $w={16}><Chevron dir="left" /></ScrollArrow>
                    <HThumb />
                    <ScrollArrow $h={15} $w={16} $ml={866}><Chevron dir="right" /></ScrollArrow>
                    <HSplit>
                        <svg width="2" height="12" viewBox="0 0 2 12"><path d="M1 0v12" stroke="#111" strokeWidth="2" /></svg>
                    </HSplit>
                </HScroll>

                <TabBar>
                    <TabNav $w={22}>
                        <svg width="9" height="12" viewBox="0 0 9 12"><path d="M1 0v12M8 0v12L2 6z" fill="#aaa" stroke="#aaa" /></svg>
                    </TabNav>
                    <TabNav $w={20}>
                        <svg width="7" height="12" viewBox="0 0 7 12"><path d="M7 0v12L0 6z" fill="#aaa" /></svg>
                    </TabNav>
                    <TabNav $w={24}>
                        <svg width="7" height="12" viewBox="0 0 7 12"><path d="M0 0v12l7-6z" fill="#888" /></svg>
                    </TabNav>
                    <TabNav $w={20}>
                        <svg width="9" height="12" viewBox="0 0 9 12"><path d="M8 0v12M1 0v12l6-6z" fill="#888" stroke="#888" /></svg>
                    </TabNav>
                    <PlusTab>
                        <svg width="13" height="13" viewBox="0 0 13 13"><path d="M6.500 0v13M0 6.500h13" stroke="#000" strokeWidth="3" /></svg>
                    </PlusTab>
                    <SheetTab>MRR</SheetTab>
                </TabBar>
            </MainColumn>

            <Sidebar>
                <SideSlot $h={26}><Icon name="menu" size={18} /></SideSlot>
                <SideSlot $h={33} $active><Icon name="props" size={22} /></SideSlot>
                <SideSlot $h={37}><Icon name="styles" size={24} /></SideSlot>
                <SideSlot $h={35}><Icon name="gallery" size={24} /></SideSlot>
                <SideSlot $h={33}><Icon name="navigator" size={24} /></SideSlot>
                <SideSlot $h={40}><Icon name="fx" size={30} /></SideSlot>
                <SideHandle><SideHandleArrow /></SideHandle>
            </Sidebar>
        </Workspace>

        <StatusBar>
            <StatusCell $w={162} $left={11}>Planilha 1 de 4</StatusCell>
            <StatusCell $w={252} />
            <StatusCell $w={168} $left={10}>PageStyle_MRR</StatusCell>
            <StatusCell $w={176} $nudge={4}>Português (Brasil)</StatusCell>
            <StatusCell $w={69} />
            <StatusCell $w={31}>
                <svg width="16" height="10" viewBox="0 0 16 10">
                    <rect x=".5" y="2" width="8" height="6" fill="none" stroke={B} />
                    <path d="M12 1h3M13.500 1v8M12 9h3" stroke="#555" fill="none" />
                </svg>
            </StatusCell>
            <StatusCell $w={29}>
                <svg width="11" height="11" viewBox="0 0 11 11">
                    <path d="M.5.500h10v10H.5z" fill="none" stroke="#d81e1e" />
                    <path d="M3 1v3h5V1M3 10V7h5v3" fill="none" stroke="#d81e1e" />
                </svg>
            </StatusCell>
            <StatusCell $w={30} />
            <StatusCell $w={258} $nudge={5}>Média: ; Soma: 0</StatusCell>
            <StatusCell $w={145} $nudge={5}>
                <svg width="11" height="3" viewBox="0 0 11 3"><path d="M0 1.500h11" stroke="#444" strokeWidth="2" /></svg>
                <ZoomTrack><ZoomThumb /></ZoomTrack>
                <svg width="11" height="11" viewBox="0 0 11 11"><path d="M0 5.500h11M5.500 0v11" stroke="#444" strokeWidth="2" /></svg>
            </StatusCell>
            <StatusCell $w={46} $open>100%</StatusCell>
        </StatusBar>

        <TaskBar>
            <StartButton><Windows /></StartButton>
            <SearchBox>
                <svg width="17" height="17" viewBox="0 0 17 17">
                    <circle cx="10.500" cy="6.500" r="5.500" fill="none" stroke="#ddd" />
                    <path d="M6.500 10.500L1 16" stroke="#ddd" />
                </svg>
                Digite aqui para pesquisar
            </SearchBox>
            <TaskGap />
            <AppSlot>{Apps.edge}</AppSlot>
            <AppSlot $running>{Apps.folder}</AppSlot>
            <AppSlot>{Apps.mail}</AppSlot>
            <AppSlot>{Apps.word}</AppSlot>
            <AppSlot>{Apps.excel}</AppSlot>
            <AppSlot>{Apps.ppt}</AppSlot>
            <AppSlot $running>{Apps.chrome}</AppSlot>
            <AppSlot $current>{Apps.calc}</AppSlot>
            <Tray>
                <TrayIcon>
                    <svg width="20" height="20" viewBox="0 0 20 20">
                        <defs>
                            <linearGradient id="sun" x1="0" y1="0" x2="0" y2="1">
                                <stop offset="0" stopColor="#ffd34d" />
                                <stop offset="1" stopColor="#ff9f0a" />
                            </linearGradient>
                        </defs>
                        <circle cx="10" cy="10" r="9.500" fill="url(#sun)" />
                    </svg>
                </TrayIcon>
                <TrayLabel $ml={8}>26°C</TrayLabel>
                <TrayLabel $ml={9}>Ensolarado</TrayLabel>
                <TrayIcon $ml={11}><Chevron dir="up" color="#eee" size={14} /></TrayIcon>
                <TrayIcon>
                    <svg width="16" height="16" viewBox="0 0 16 16"><path d="M2 3h8v10H2zM10 7l4-2v6l-4-2" fill="none" stroke="#eee" /></svg>
                </TrayIcon>
                <TrayIcon>
                    <svg width="14" height="18" viewBox="0 0 14 18"><path d="M3 1h6v4H3zM2 5h8v12H2zM9 14l2 2 3-4" fill="none" stroke="#eee" /></svg>
                </TrayIcon>
                <TrayIcon>
                    <svg width="16" height="16" viewBox="0 0 16 16"><path d="M1 9a10 10 0 0 1 12-5M3 11a7 7 0 0 1 8-4M5 13a4 4 0 0 1 4-3" fill="none" stroke="#eee" /><circle cx="11" cy="13" r="1.500" fill="#eee" /></svg>
                </TrayIcon>
                <TrayIcon>
                    <svg width="17" height="16" viewBox="0 0 17 16"><path d="M1 5.500h3L8 2v12l-4-3.500H1zM10.500 5a4 4 0 0 1 0 6M12.500 3a7 7 0 0 1 0 10" fill="none" stroke="#eee" /></svg>
                </TrayIcon>
                <TrayStack $w={36}>POR<br />PTB2</TrayStack>
                <TrayStack $w={70}>09:19<br />29/11/2021</TrayStack>
                <TrayIcon $w={40}>
                    <svg width="17" height="16" viewBox="0 0 17 16"><path d="M.5.500h16v11h-5l-3 3-3-3h-5z" fill="none" stroke="#eee" /></svg>
                </TrayIcon>
                <TrayIcon $w={13} />
            </Tray>
        </TaskBar>
    </Page>
);

export default App;
